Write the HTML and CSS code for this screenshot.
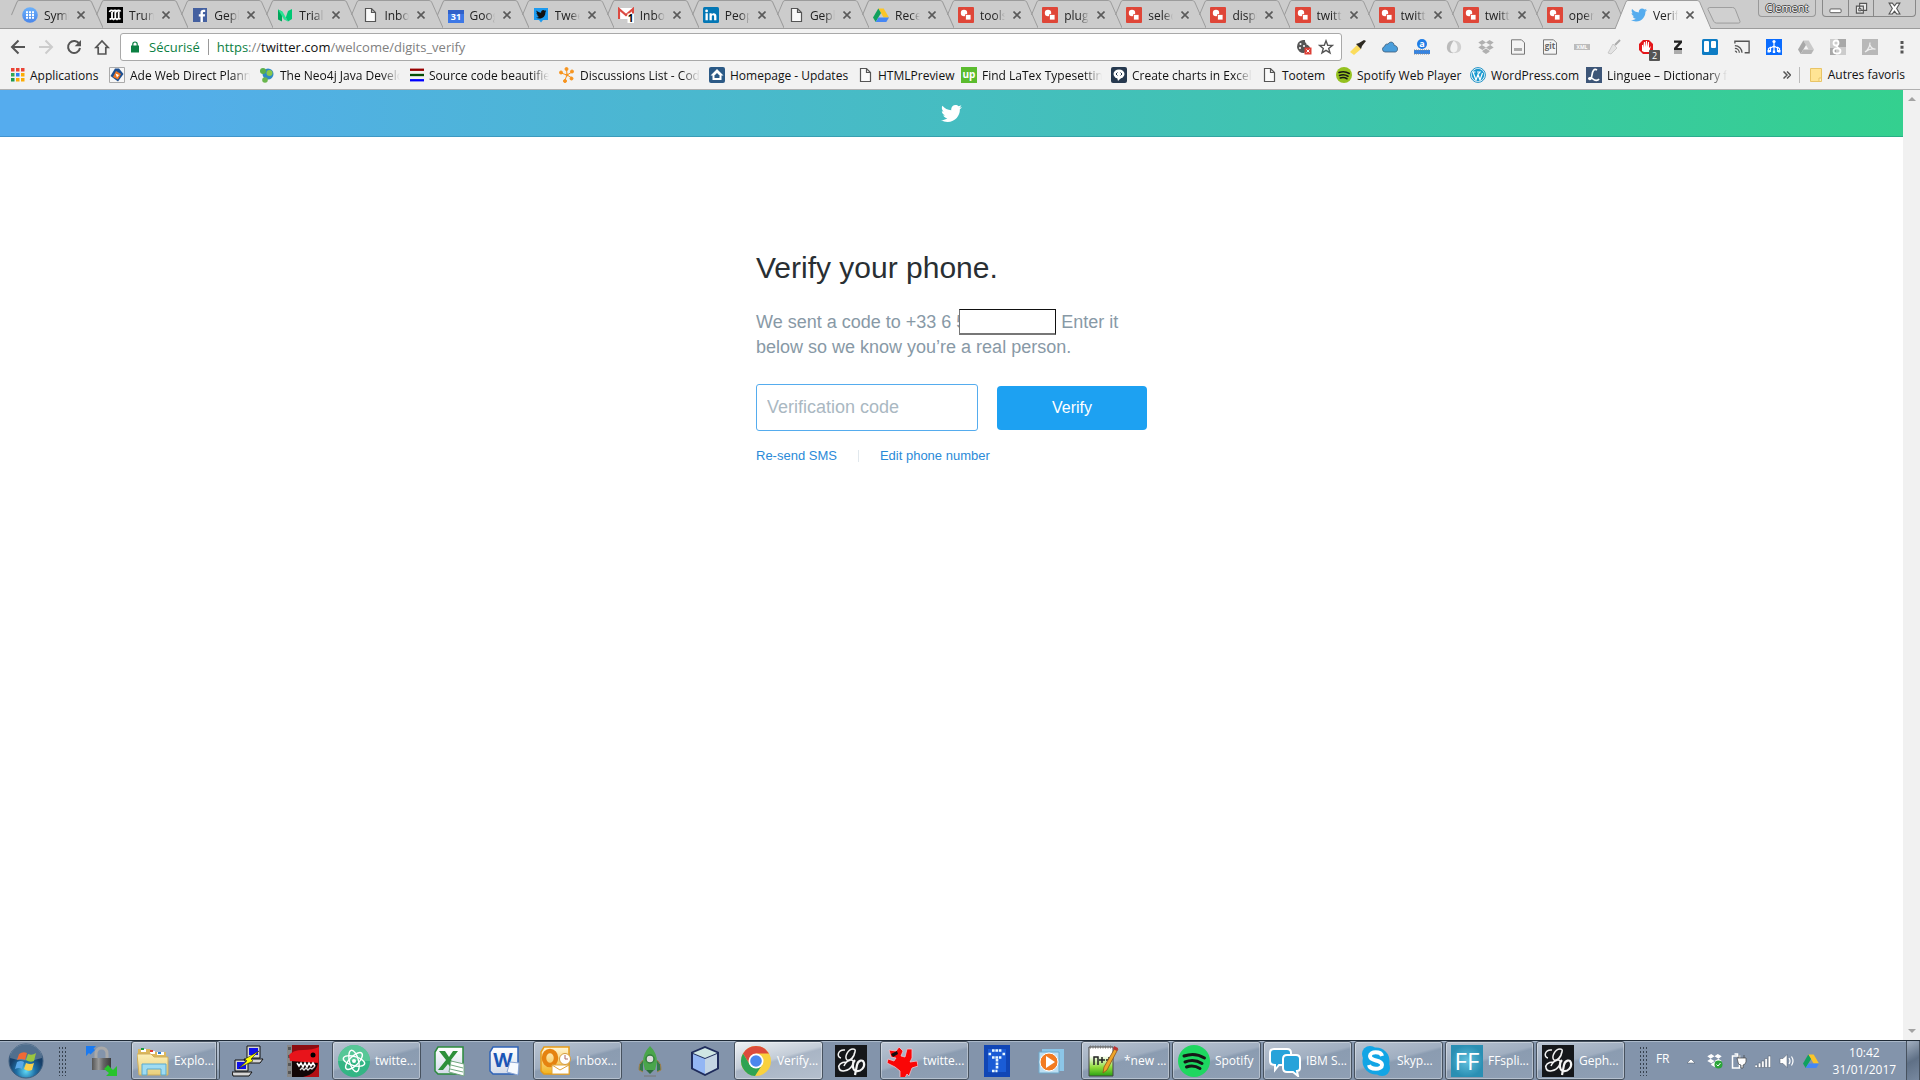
FILE: index.html
```html
<!DOCTYPE html>
<html lang="en">
<head>
<meta charset="utf-8">
<title>Verify your phone</title>
<link rel="stylesheet" href="styles.css">
</head>
<body>
<svg class="paints" aria-hidden="true">
  <defs>
    <linearGradient id="g-blue" x2="0" y2="1"><stop offset="0" stop-color="#6bb1fb"/><stop offset="1" stop-color="#4a86ea"/></linearGradient>
    <linearGradient id="g-page" x2="0" y2="1"><stop offset="0" stop-color="#fff"/><stop offset="1" stop-color="#d5dcea"/></linearGradient>
    <linearGradient id="g-gold" x2="0" y2="1"><stop offset="0" stop-color="#fff6d8"/><stop offset="1" stop-color="#f2b21c"/></linearGradient>
    <linearGradient id="g-folder" x2="0" y2="1"><stop offset="0" stop-color="#fbefb6"/><stop offset="1" stop-color="#e9cf7c"/></linearGradient>
    <linearGradient id="g-metal"><stop offset="0" stop-color="#555"/><stop offset=".35" stop-color="#999"/><stop offset=".6" stop-color="#666"/><stop offset="1" stop-color="#3c3c3c"/></linearGradient>
    <radialGradient id="g-orb" cy=".8"><stop offset="0" stop-color="#5fd8f6"/><stop offset=".55" stop-color="#1f6fa5"/><stop offset="1" stop-color="#173f69"/></radialGradient>
    <radialGradient id="g-ff"><stop offset="0" stop-color="#62c0dd"/><stop offset="1" stop-color="#2a8fb3"/></radialGradient>
    <linearGradient id="g-note" x2="0" y2="1"><stop offset=".3" stop-color="#fff"/><stop offset=".7" stop-color="#8fdc3a"/><stop offset="1" stop-color="#29a012"/></linearGradient>
  </defs>
</svg>
<svg class="sprite" aria-hidden="true">
  <symbol id="tab-line" viewBox="0 0 97 28" preserveAspectRatio="none"><path d="M5.500 15 11 2Q11.500 .5 13 .5H83Q84.500 .5 85.500 2L97 28" fill="none" stroke="#9c9c9c" vector-effect="non-scaling-stroke"/></symbol>
  <symbol id="tab-active" viewBox="0 0 97 28" preserveAspectRatio="none"><path d="M0 28 11 2Q11.500 .5 13 .5H83Q84.500 .5 85.500 2L97 28" fill="#f2f2f2" stroke="#9c9c9c" vector-effect="non-scaling-stroke"/></symbol>
  <symbol id="close" viewBox="0 0 8 8"><path d="M.5.5l7 7M7.500.5l-7 7" stroke="#5a5a5a" stroke-width="1.600"/></symbol>
  <symbol id="bird" viewBox="0 0 24 24"><path d="M23.954 4.569c-.885.389-1.830.654-2.825.775 1.014-.611 1.794-1.574 2.163-2.723-.951.555-2.005.959-3.127 1.184-.896-.959-2.173-1.559-3.591-1.559-2.717 0-4.920 2.203-4.920 4.917 0 .39.045.765.127 1.124C7.691 8.094 4.066 6.130 1.640 3.161c-.427.722-.666 1.561-.666 2.475 0 1.710.87 3.213 2.188 4.096-.807-.026-1.566-.248-2.228-.616v.061c0 2.385 1.693 4.374 3.946 4.827-.413.111-.849.171-1.296.171-.314 0-.615-.03-.916-.086.631 1.953 2.445 3.377 4.604 3.417-1.680 1.319-3.809 2.105-6.102 2.105-.39 0-.779-.023-1.170-.067 2.189 1.394 4.768 2.209 7.557 2.209 9.054 0 13.999-7.496 13.999-13.986 0-.209 0-.42-.015-.63.961-.689 1.800-1.560 2.460-2.548z" fill="currentColor"/></symbol>
  <symbol id="f-grid" viewBox="0 0 16 16"><circle cx="8" cy="8" r="7.800" fill="url(#g-blue)"/><path d="M4 5.200h8M4 8h8M4 10.800h8" stroke="#fff" stroke-width="2" stroke-dasharray="2 1"/></symbol>
  <symbol id="f-m" viewBox="0 0 16 16"><path d="M0 0h16v16H0z"/><path d="M2.500 5C3 3 5 3 6 4.200c1-1.200 3-1.200 3.700 0 1.200-1.300 3.300-1 3.800.3M5 5v6.500M8.300 4.500V11M11.700 4.500V11M2.500 12.300l2.500-1 1.500 1.200 1.800-1.200 1.700 1.200 1.700-1.200 1.800 1" fill="none" stroke="#fff" stroke-width="1.800"/></symbol>
  <symbol id="f-fb" viewBox="0 0 16 16"><path d="M1 1h14v14H1z" fill="#4460a0"/><path d="M8.500 15V9.500H6.800V7.300h1.700V5.600c0-2 1.200-2.900 2.900-2.900h1.800v2.200h-1.200c-.9 0-1.100.4-1.100 1.100v1.300h2.200l-.3 2.200h-1.900V15z" fill="#fff"/></symbol>
  <symbol id="f-n" viewBox="0 0 16 16"><path d="M1 2.500l4 2v10l-4-2z" fill="#00a65a"/><path d="M1 2.500l4.500 2 5.500 10-4-2z" fill="#29e292"/><path d="M11 4l4-2v10l-4 2.500-2.200-4z" fill="#00c874"/></symbol>
  <symbol id="page" viewBox="0 0 16 16"><path d="M3.500 1.500h6l4 4v9h-10zM9.500 1.500v4h4" fill="#fafafa" stroke="#555" stroke-width="1.200"/></symbol>
  <symbol id="f-cal" viewBox="0 0 16 16"><path d="M0 1h16v4H0z" fill="#ccc"/><path d="M0 3h16v13H0z" fill="#3d78e6"/><path d="M0 3h16v4H0z" fill="#3161c9"/><text x="8" y="12.500" text-anchor="middle" font-size="9" font-weight="700" fill="#fff">31</text></symbol>
  <symbol id="f-tw" viewBox="0 0 16 16"><path d="M1 1h14v12h-5l-2 2.500L6 13H1z" fill="#1d9bf0"/><svg x="3" y="2" width="10.500" height="10.500" color="#111"><use href="#bird"/></svg></symbol>
  <symbol id="f-mail" viewBox="0 0 16 16"><path d="M0 1h16v11H0z" fill="#fff"/><path d="M1 12V2l7 6 7-6v5" fill="none" stroke="#dc4a41" stroke-width="2.200"/><path d="M9.500 6.500H16V16H9.500z" fill="#fff"/><text x="12.500" y="15" text-anchor="middle" font-size="10" font-weight="700">1</text></symbol>
  <symbol id="f-in" viewBox="0 0 16 16"><rect width="16" height="16" rx="1.500" fill="#0377b5"/><path d="M2.500 6.300h2.300v7H2.500zM6.500 6.300h2.200v1c1-1.700 4.700-1.700 4.700 1.700v4.300h-2.300V9.600c0-2-2.300-1.900-2.300 0v3.700H6.500z" fill="#fff"/><circle cx="3.600" cy="3.900" r="1.400" fill="#fff"/></symbol>
  <symbol id="drive" viewBox="0 0 16 16"><path d="M5.300 1.500h5.400L16 10.500h-5.400z" fill="#fbc527"/><path d="M5.300 1.500L8 6.100 2.700 15 0 10.500z" fill="#11a15e"/><path d="M5.500 10.500H16L13.300 15H2.700z" fill="#4687f4"/></symbol>
  <symbol id="drive-grey" viewBox="0 0 16 16"><path d="M5.300 1.500h5.400L16 10.500h-5.400z" fill="#c9c9c9"/><path d="M5.300 1.500L8 6.100 2.700 15 0 10.500z" fill="#a8a8a8"/><path d="M5.500 10.500H16L13.300 15H2.700z" fill="#b5b5b5"/></symbol>
  <symbol id="f-red" viewBox="0 0 16 16"><rect width="16" height="16" rx="1" fill="#df4638"/><circle cx="6" cy="6" r="3.200" fill="#fff"/><path d="M7.500 7.500H13V13H7.500z" fill="#fff" stroke="#df4638" stroke-width=".8"/></symbol>
  <symbol id="back" viewBox="0 0 16 16"><path d="M15 8H2M8.500 1.500L2 8l6.500 6.500" fill="none" stroke="currentColor" stroke-width="2"/></symbol>
  <symbol id="reload" viewBox="0 0 16 16"><path d="M13.300 5A6 6 0 1 0 14 9" fill="none" stroke="currentColor" stroke-width="2"/><path d="M15 1v6.300H8.700z" fill="currentColor"/></symbol>
  <symbol id="home" viewBox="0 0 16 16"><path d="M1.800 8.500L8 2l6.200 6.500h-2.400V15H4.200V8.500z" fill="none" stroke="currentColor" stroke-width="1.700"/></symbol>
  <symbol id="lock" viewBox="0 0 8 12"><path d="M0 4.500h8V11.500H0z" fill="#0b8043"/><path d="M1.800 5V3.200a2.200 2.200 0 0 1 4.400 0V5" fill="none" stroke="#0b8043" stroke-width="1.200"/></symbol>
  <symbol id="cookie" viewBox="0 0 16 16"><path d="M7 1a6.500 6.500 0 1 0 1 13l6-5c0-2-1.500-1.500-2-3-1.500 0-2-1-1.700-2C9 4 9 2 9 1z" fill="#555"/><circle cx="4.500" cy="5" r="1" fill="#fff"/><circle cx="4" cy="9" r="1" fill="#fff"/><circle cx="8" cy="7" r="1" fill="#fff"/><path d="M8.500 8.500h7v7h-7z" fill="#dd4037"/><path d="M10.500 10.500l3 3M13.500 10.500l-3 3" stroke="#fff"/></symbol>
  <symbol id="star" viewBox="0 0 16 16"><path d="M8 1.800l1.700 4.400 4.700.2-3.700 3 1.300 4.500L8 11.300l-4 2.600 1.300-4.500-3.700-3 4.700-.2z" fill="none" stroke="#555" stroke-width="1.400"/></symbol>
  <symbol id="e-torch" viewBox="0 0 16 16"><path d="M7 6L0 13l4 3 7-6z" fill="#fbdc5c"/><path d="M6 5l5 5 1-3 4-5-2-1-5 3z" fill="#2d2a22"/></symbol>
  <symbol id="e-cloud" viewBox="0 0 16 16"><path d="M3 13a2.800 2.800 0 0 1-.4-5.500C3 5 5 4.700 6 5.200 7.500 2 12 2.500 12.200 6.500 16.500 6.500 16.500 13 13 13z" fill="#4a9edb" stroke="#3c5c78" stroke-width=".8"/></symbol>
  <symbol id="e-a" viewBox="0 0 16 16"><circle cx="8" cy="5" r="5" fill="#1f7de6"/><text x="8" y="8" text-anchor="middle" font-size="9" font-weight="700" fill="#fff">a</text><path d="M0 11h16v4H0z" fill="#3684e2"/><path d="M0 11h16M0 15h16" stroke="#888" stroke-dasharray="1 1"/></symbol>
  <symbol id="e-swirl" viewBox="0 0 16 16"><path d="M8 1.500C2 1 .5 6 1 10c1 4 5 4.500 7 4-4-1-4-3.500-3.500-6S6.500 3 8 1.500z" fill="#bbb"/><path d="M7 1.500c6-.5 9 4 8 8-1 4-5 5-8 4.500 4-1 4.500-3 4.500-6S10 3 7 1.500z" fill="#d0d0d0"/></symbol>
  <symbol id="dropbox" viewBox="0 0 16 16"><path d="M4.500 1L8 3.500 3.800 6 .3 3.500zM11.500 1l4.200 2.500L12.200 6 8 3.500zM3.800 6L8 8.500 4.500 11 .3 8.500zM12.200 6l3.500 2.500-4.200 2.500L8 8.500zM8 9.500l3.500 2.300v1L8 15l-3.500-2.200v-1z" fill="currentColor"/></symbol>
  <symbol id="e-disk" viewBox="0 0 16 16"><path d="M1.500.8h10l3 3v11.400h-13z" fill="#f4f4f4" stroke="#777"/><path d="M4 9h8v3H4z" fill="#aaa"/></symbol>
  <symbol id="e-git" viewBox="0 0 16 16"><path d="M1.500.8h10l3 3v11.400h-13z" fill="#f4f4f4" stroke="#777"/><text x="8" y="10" text-anchor="middle" font-size="8" font-weight="700" fill="#666">git</text></symbol>
  <symbol id="e-xml" viewBox="0 0 16 16"><path d="M0 5h16v6H0z" fill="#bcbcbc"/><text x="8" y="10" text-anchor="middle" font-size="5" font-weight="700" fill="#fff">XML</text></symbol>
  <symbol id="e-brush" viewBox="0 0 16 16"><path d="M14 1L9 6" stroke="#aaa" stroke-width="2"/><path d="M7 5l4 4-6 6-3-1z" fill="#e3e3e3" stroke="#bbb" stroke-width=".7"/></symbol>
  <symbol id="e-block" viewBox="0 0 22 22"><path d="M5 1h6l4 4v6l-4 4H5l-4-4V5z" fill="#e4171b"/><path d="M4 12V6h1v3l1-6h1v5l1-6h1v6l1-5h1v6l2-2-2 6H6z" fill="#fff"/><rect x="11" y="11" width="11" height="11" rx="1" fill="#555"/><text x="16.500" y="20" text-anchor="middle" font-size="9" fill="#fff">2</text></symbol>
  <symbol id="e-z" viewBox="0 0 16 16"><path d="M4 1.500h8v2.300L7.300 9H12v2H4V9l4.700-5.300H4z" fill="#222"/><path d="M4 12h8M4 14h8" stroke="#666"/></symbol>
  <symbol id="e-board" viewBox="0 0 16 16"><rect width="16" height="16" rx="1.500" fill="#0e7cc4"/><rect x="2" y="2" width="5" height="11" rx="1" fill="#fff"/><rect x="9" y="2" width="5" height="7" rx="1" fill="#fff"/></symbol>
  <symbol id="e-cast" viewBox="0 0 18 16"><path d="M1 4V1.500h16v13h-5" fill="none" stroke="#555" stroke-width="1.500"/><path d="M1 6.500a8 8 0 0 1 8 8M1 9.500a5 5 0 0 1 5 5M1 12.500a2 2 0 0 1 2 2" fill="none" stroke="#555" stroke-width="1.400"/></symbol>
  <symbol id="e-tree" viewBox="0 0 16 16"><path d="M0 0h16v16H0z" fill="#0a6cff"/><path d="M8 3v10M8 7L4.500 9v4M8 7l3.500 2v4M2.500 12V9.500L5 8M13.500 12V9.500L11 8" fill="none" stroke="#fff" stroke-width="1.200"/><circle cx="8" cy="2.500" r="1.600" fill="#fff"/><path d="M1.500 11h2.500v2.500H1.500zM12 11h2.500v2.500H12zM6.800 11.500h2.400V14H6.800z" fill="#fff"/></symbol>
  <symbol id="e-g" viewBox="0 0 16 16"><path d="M0 0h16v16H0z" fill="#ccc"/><path d="M8 0h8v8H8zM0 9h6v7H0z" fill="#a8a8a8"/><circle cx="6" cy="4" r="2.500" fill="none" stroke="#fff" stroke-width="1.800"/><ellipse cx="7" cy="12" rx="3.500" ry="2.600" fill="none" stroke="#fff" stroke-width="1.800"/><path d="M6 6.500L8.500 9" stroke="#fff" stroke-width="1.500"/></symbol>
  <symbol id="e-pdf" viewBox="0 0 16 16"><path d="M0 0h16v16H0z" fill="#b8b8b8"/><path d="M3 13c4-3 5-6 5-9.500M8 6c1 3 3 4 5.500 4.200C10 9.500 6 10.500 3 13" fill="none" stroke="#eee" stroke-width="1.200"/></symbol>
  <symbol id="menu" viewBox="0 0 16 16"><path d="M6.500 2h3v3h-3zM6.500 6.700h3v3h-3zM6.500 11.400h3v3h-3z" fill="#555"/></symbol>
  <symbol id="b-apps" viewBox="0 0 14 14"><path d="M0 0h3.500v3.500H0zM5 0h3.500v3.500H5zM10 0h3.500v3.500H10z" fill="#ea4335"/><path d="M0 5h3.500v3.500H0z" fill="#34a853"/><path d="M5 5h3.500v3.500H5z" fill="#2d80f5"/><path d="M10 5h3.500v3.500H10zM5 10h3.500v3.500H5zM10 10h3.500v3.500H10z" fill="#fbac06"/><path d="M0 10h3.500v3.500H0z" fill="#1f9950"/></symbol>
  <symbol id="b-ade" viewBox="0 0 16 16"><path d="M.5.5h15v15H.5z" fill="#f6f6f6" stroke="#aaa"/><path d="M6 1.500h4L14.500 7 9 14.500 1.500 9z" fill="#1d4f91"/><path d="M7 4l5 3-3 5.500L4 10z" fill="#ee7623"/><path d="M6.500 6.500l3.500 1.500-2 2.500z" fill="#fff"/></symbol>
  <symbol id="b-neo" viewBox="0 0 16 16"><circle cx="9" cy="7" r="5.500" fill="#2d8ac5"/><circle cx="4" cy="4" r="3" fill="#5bb04a"/><circle cx="10.500" cy="6" r="3" fill="#8cc84b"/><circle cx="6" cy="13" r="2.800" fill="#6ab64d"/></symbol>
  <symbol id="b-src" viewBox="0 0 12 12"><path d="M0 1.500h12" stroke="#900" stroke-width="2"/><path d="M0 6h12" stroke="#064d06" stroke-width="2"/><path d="M0 10.500h12" stroke="#00f" stroke-width="2"/></symbol>
  <symbol id="b-disc" viewBox="0 0 16 16"><g fill="#f7941e" stroke="#f7941e"><path d="M8 8L7.500 2M8 8l5-3M8 8l5 3M8 8l-2 5M8 8L2 6"/><circle cx="7.500" cy="2" r="1.500"/><circle cx="13" cy="4.500" r="1.500"/><circle cx="12.500" cy="11.500" r="1.500"/><circle cx="6" cy="14" r="1.500"/><circle cx="2" cy="5.500" r="1.500"/><circle cx="8" cy="8" r="1"/></g></symbol>
  <symbol id="b-home" viewBox="0 0 16 16"><rect width="16" height="16" rx="2" fill="#2c5a86"/><path d="M8 2l6.500 6.500h-2V13h-9V8.500h-2z" fill="#fff"/><path d="M8 6l2.500 2.500V11h-5V8.500z" fill="#2c5a86"/></symbol>
  <symbol id="b-up" viewBox="0 0 16 16"><path d="M0 0h16v16H0z" fill="#5bbc2e"/><text x="8" y="11" text-anchor="middle" font-size="10" font-weight="700" fill="#fff">up</text></symbol>
  <symbol id="b-chart" viewBox="0 0 16 16"><rect width="16" height="16" rx="2" fill="#26394f"/><ellipse cx="8" cy="7" rx="5.500" ry="4.500" fill="#fff"/><path d="M6 10l1 4 3-3z" fill="#fff"/><path d="M6.500 5.500L5 7l1.500 1.500M9.500 5.500L11 7 9.500 8.500" fill="none" stroke="#26394f"/></symbol>
  <symbol id="spotify" viewBox="0 0 32 32"><circle cx="16" cy="16" r="16" fill="currentColor"/><path d="M6 11q11-4 20.500 2M7 17q9-3.500 17 1.500M8.500 22q7-2.500 13.500 1.500" fill="none" stroke="#161616" stroke-width="3" stroke-linecap="round"/></symbol>
  <symbol id="b-wp" viewBox="0 0 16 16"><circle cx="8" cy="8" r="7.400" fill="#fff" stroke="#1b8fc4"/><circle cx="8" cy="8" r="6.200" fill="#1b9ad0"/><path d="M3 5l3 8L8 7.500 10 13l2.500-7M2.500 5h3M7 5h3L8 7.500" fill="none" stroke="#fff" stroke-width="1.200"/></symbol>
  <symbol id="b-ling" viewBox="0 0 16 16"><path d="M0 0h16v16H0z" fill="#3d5678"/><path d="M11 3C8 1 6.500 4 6 8s-2 5-3 4 2-2 4 0 5 1.500 6 0" fill="none" stroke="#fff" stroke-width="1.700"/></symbol>
  <symbol id="folder" viewBox="0 0 12 14"><path d="M.5.5h11v10l-1 3H.5z" fill="#ffe494" stroke="#e8c467"/><path d="M9 10h2.500v3.500H9z" fill="#fff0bf" stroke="#e8c467"/></symbol>
  <symbol id="t-orb" viewBox="0 0 36 36"><circle cx="18" cy="18" r="17" fill="url(#g-orb)" stroke="#3f5f80"/><path d="M2 15a16 14 0 0 1 32 0q-16 5-32 0z" fill="#fff" opacity=".25"/><path d="M11 11q4-3 8-1l-2 7q-4-2-8 0z" fill="#ef6a35"/><path d="M20 11q4 2 8-1l-2 8q-4 2-8-1z" fill="#9ac640"/><path d="M9 19q4-2 7 0l-2 7q-3-2-7 0z" fill="#5aa8e8"/><path d="M18 20q4 2 8 0l-2 7q-4 2-8-1z" fill="#fcd04b"/></symbol>
  <symbol id="t-lock" viewBox="0 0 32 32"><path d="M10 14V9q0-6 5.500-6T21 9v5" fill="none" stroke="#a9a9a9" stroke-width="3"/><path d="M6 13h19v12H6z" fill="url(#g-metal)"/><path d="M0 1h10L7.500 3.500 9 5 4.500 9.500 3 8 0 11z" fill="#1b7af0"/><path d="M31 31H20l3-3-5-4 4-4 5 5 4-4z" fill="#27c32c"/></symbol>
  <symbol id="t-files" viewBox="0 0 32 32"><path d="M1 4h12l2 3h14v17H1z" fill="#dcb75a"/><path d="M4 4h5v3H4zM13 6h5v3h-5zM20 7h7v3h-7z" fill="#fff"/><path d="M4 3h3v2H4z" fill="#1a9c3c"/><path d="M13 5h3v2h-3z" fill="#e23b2e"/><path d="M21 7h3v2h-3z" fill="#2880d9"/><path d="M0 9h14l3 3h14v18H2z" fill="url(#g-folder)" stroke="#cfae5c"/><path d="M5 30V19h24v11h-5v-6H10v6z" fill="#9fdcf2" stroke="#58a9cf"/></symbol>
  <symbol id="t-putty" viewBox="0 0 32 32"><g stroke="#111" fill="#d6d6d6"><path d="M15 1h13v12H15zM12 14h19l-3 4H14zM3 15h13v11H3zM0 27h20l-3 4H1z"/></g><path d="M17 3h9v7h-9zM5 17h9v7H5z" fill="#1010e8"/><path d="M27 6L13 14l2 2-8 7 14-7-2-2z" fill="#ff0" stroke="#222" stroke-width=".6"/></symbol>
  <symbol id="t-red" viewBox="0 0 32 32"><path d="M0 0h32v32H0z" fill="#120606"/><path d="M0 0h5v32H0z" fill="#888"/><path d="M1 2h3v3H1zM1 10h3v3H1zM1 18h3v3H1zM1 26h3v3H1z" fill="#555"/><path d="M5 0h27v7H5z" fill="#8d0c10"/><path d="M2 10Q6 5 16 5t16-3v16q-14-1-29-2z" fill="#e8141b"/><path d="M32 2v30H16q14-3 15-15z" fill="#b30e14"/><circle cx="26" cy="10" r="2.500"/><path d="M10 18l2 3 2-3 2 4 2-4 2 4 2-4 2 3 2-3 2 3" fill="none" stroke="#fff" stroke-width="1.600"/><path d="M13 25l2-2 2 2 2-2 2 2 2-2 2 1 3-3" fill="none" stroke="#ddd" stroke-width="1.400"/></symbol>
  <symbol id="t-atom" viewBox="0 0 32 32"><circle cx="16" cy="16" r="16" fill="#33b584"/><path d="M0 16a16 16 0 0 1 32 0z" fill="#66cfa0" opacity=".7"/><g fill="none" stroke="#fff" stroke-width="1.400"><ellipse cx="16" cy="16" rx="11" ry="4.500" transform="rotate(15 16 16)"/><ellipse cx="16" cy="16" rx="11" ry="4.500" transform="rotate(75 16 16)"/><ellipse cx="16" cy="16" rx="11" ry="4.500" transform="rotate(135 16 16)"/></g><circle cx="16" cy="16" r="2" fill="#fff"/></symbol>
  <symbol id="t-excel" viewBox="0 0 32 32"><path d="M5 2h25v27H5L2 26V7z" fill="url(#g-page)" stroke="#2b8a3c" stroke-width="1.500"/><path d="M6 6h6l4 6 4-6h5l-7 9 7 10h-6l-4-6-5 6H5l8-10z" fill="#2d8f3a"/><path d="M18 16l13 3v12l-15-4z" fill="#fff" stroke="#72a780"/><path d="M18 20l12 3M17 24l13 3" stroke="#72a780"/></symbol>
  <symbol id="t-word" viewBox="0 0 32 32"><path d="M5 2h25v27H5L2 26V7z" fill="url(#g-page)" stroke="#2f63b8" stroke-width="1.500"/><text x="15" y="22" text-anchor="middle" font-size="20" font-weight="700" fill="#1a55b6">W</text><path d="M22 17l9 1-1 12-11-3z" fill="#f7faff" stroke="#8ca6d4"/></symbol>
  <symbol id="t-outlook" viewBox="0 0 32 32"><path d="M5 2h25v27H5L2 26V7z" fill="url(#g-gold)" stroke="#e79b16" stroke-width="1.500"/><ellipse cx="11" cy="13" rx="6" ry="7" fill="none" stroke="#e58310" stroke-width="4.500"/><path d="M13 20h17v9H13z" fill="#fff" stroke="#e0a63c"/><path d="M13 20l8 5 9-5" fill="none" stroke="#e0a63c"/><circle cx="26" cy="14" r="5.500" fill="#fff" stroke="#d49b3c"/><path d="M26 10v4h3" fill="none" stroke="#a66"/></symbol>
  <symbol id="t-rocket" viewBox="0 0 32 32"><path d="M16 1q-7 7-7 16l2 8h10l2-8q0-9-7-16z" fill="#4aa64b"/><path d="M9 15q-5 4-4 10l4 2M23 15q5 4 4 10l-4 2" fill="#347a4b" stroke="#a7804e"/><path d="M12 25h8l-4 4z" fill="#2c6b3c"/><circle cx="16" cy="14" r="4" fill="#ddd" stroke="#327e3c" stroke-width="1.500"/><path d="M10 31h12" stroke="#777" stroke-width="1"/></symbol>
  <symbol id="t-cube" viewBox="0 0 32 32"><path d="M16 1l14 6v17l-14 7L2 24V7z" fill="#1f2c5c"/><path d="M16 3l12 5-12 5L4 8z" fill="#cfe6e3"/><path d="M4 9l12 5v15L4 23z" fill="#93b6f4"/><path d="M28 9l-12 5v15l12-6z" fill="#c4d5e4"/></symbol>
  <symbol id="t-chrome" viewBox="0 0 32 32"><circle cx="16" cy="16" r="15" fill="#f9d13e"/><path d="M3 8.500A15 15 0 0 1 29 8.500H16L10 20z" fill="#dd4b3b"/><path d="M3 8.500A15 15 0 0 0 15 31l7-11-12 0z" fill="#2fa353"/><circle cx="16" cy="16" r="7.500" fill="#fff"/><circle cx="16" cy="16" r="5.800" fill="#4a87ee"/></symbol>
  <symbol id="t-gephi" viewBox="0 0 32 32"><path d="M0 0h32v32H0z" fill="#15171a"/><path d="M19 9q3-5-1-5c-5 0-9 8-6 11 3 1 7-3 8-8M10 5C3 4 1 12 6 13M20 7c-1 6-4 9-9 10-5 0-8 3-7 6 1 5 10 3 13-2 2-3 2-6-1-6-3 0-6 3-7 6" fill="none" stroke="#f4f4f4" stroke-width="1.500"/><path d="M20 15c-3 3-3 10 1 11 5 1 9-4 8-8-1-4-6-3-7 2l-2 10" fill="none" stroke="#f4f4f4" stroke-width="2.200"/></symbol>
  <symbol id="t-splat" viewBox="0 0 32 32"><path d="M3 5l7 1 3-4 4 4-2 5 4 1 2-8h5v9l-2 4 7-1 1 5-6 2-3 8-2-2-2 4h-5v-7l-5-4-8-4 1-4 6 2 2-3-5-1z" fill="#fa0606" stroke="#e9c7d2" stroke-width=".8"/><path d="M5 9l6-3 1 3-5 3z" fill="#111"/></symbol>
  <symbol id="t-t" viewBox="0 0 26 32"><path d="M0 0h26v32H0z" fill="#1146b5"/><path d="M4 4h18v23H4z" fill="#1a5cd6"/><path d="M8 5.500h10M4.500 9h3M18.500 9h3M8 12.500h10M13 14v10M8 26h5.500" fill="none" stroke="#e8f7ff" stroke-width="2.600" stroke-dasharray="2.600 .8"/></symbol>
  <symbol id="t-play" viewBox="0 0 32 32"><path d="M6 4h22v22H6z" fill="#8cc6e8"/><path d="M3 7h20v21H3z" fill="#bcdff3" stroke="#6ca8ca"/><circle cx="13" cy="17" r="9" fill="#f27b21" stroke="#fff"/><path d="M10 11l9 6-9 6z" fill="#fff"/></symbol>
  <symbol id="t-npp" viewBox="0 0 32 32"><path d="M2 2h24v29H2z" fill="url(#g-note)" stroke="#444"/><path d="M3 2h22" stroke="#777" stroke-width="3" stroke-dasharray="1 1.500"/><path d="M7 20v-8h4v8M12 15h6M15 12v6M19 15h6M22 12v6" fill="none" stroke="#222" stroke-width="1.500"/><path d="M28 3l3 1-11 21-4 3 1-6z" fill="#eea52a" stroke="#8b541c" stroke-width=".8"/><path d="M27 1l4 2-1 3-4-2z" fill="#b33"/></symbol>
  <symbol id="t-chat" viewBox="0 0 32 32"><g stroke="#fff" stroke-width="2" fill="#27a3da"><path d="M5 4h13q4 0 4 4v8q0 4-4 4h-8l-4 5v-5q-5 0-5-4V8q0-4 4-4z"/><path d="M18 10h9q4 0 4 4v9q0 3-3 3l1 5-5-4h-6q-4 0-4-4v-9q0-4 4-4z"/></g></symbol>
  <symbol id="t-skype" viewBox="0 0 32 32"><circle cx="16" cy="16" r="13.500" fill="#12a5e5"/><circle cx="10" cy="9" r="8" fill="#12a5e5"/><circle cx="22" cy="23" r="8" fill="#12a5e5"/><path d="M22 11c-1-5-12-5-12 0 0 6 12 3 12 9 0 5-12 5-13 0" fill="none" stroke="#fff" stroke-width="4"/></symbol>
  <symbol id="t-ff" viewBox="0 0 32 32"><path d="M0 0h32v32H0z" fill="url(#g-ff)"/><text x="16" y="25" text-anchor="middle" font-size="24" fill="#fff">FF</text></symbol>
  <symbol id="s-drop" viewBox="0 0 16 16"><svg color="#fff" width="15" height="15"><use href="#dropbox"/></svg><circle cx="11.500" cy="11.500" r="4" fill="#2ba53a"/><path d="M9.500 11.500l1.500 1.500 2.500-3" fill="none" stroke="#fff"/></symbol>
  <symbol id="s-plug" viewBox="0 0 16 16"><path d="M1.500 3h7v12h-7zM3.500 1h3v2" fill="none" stroke="#fff" stroke-width="1.500"/><path d="M6 5h9v4q-1 3-3 3v3h-2v-3Q7 12 7 9zM8 2v3M13 2v3" fill="#fff" stroke="#444" stroke-width=".7"/></symbol>
  <symbol id="s-bars" viewBox="0 0 16 16"><path d="M0 12h2.500v2.500H0zM3.300 10h2.500v4.500H3.300zM6.600 8h2.500v6.500H6.600zM9.900 5.500h2.500v9H9.900zM13.200 3h2.500v11.500h-2.500z" fill="#fff" stroke="#4c5868" stroke-width=".5"/></symbol>
  <symbol id="s-vol" viewBox="0 0 16 16"><path d="M1 5.500h3l4-4v13l-4-4H1z" fill="#fff" stroke="#4c5868" stroke-width=".5"/><path d="M10 5q2 3 0 6M12.500 3.500q3 4.500 0 9" fill="none" stroke="#fff" stroke-width="1.200"/></symbol>
</svg>

<header class="browser">
  <div class="strip">
    <ul class="tabs">
      <li class="tab"><svg class="edge"><use href="#tab-line"/></svg><button class="title"><svg class="ico"><use href="#f-grid"/></svg><span>Syml</span></button><button class="close" aria-label="Close"><svg><use href="#close"/></svg></button></li>
      <li class="tab"><svg class="edge"><use href="#tab-line"/></svg><button class="title"><svg class="ico"><use href="#f-m"/></svg><span>Trum</span></button><button class="close" aria-label="Close"><svg><use href="#close"/></svg></button></li>
      <li class="tab"><svg class="edge"><use href="#tab-line"/></svg><button class="title"><svg class="ico"><use href="#f-fb"/></svg><span>Geph</span></button><button class="close" aria-label="Close"><svg><use href="#close"/></svg></button></li>
      <li class="tab"><svg class="edge"><use href="#tab-line"/></svg><button class="title"><svg class="ico"><use href="#f-n"/></svg><span>Trial</span></button><button class="close" aria-label="Close"><svg><use href="#close"/></svg></button></li>
      <li class="tab"><svg class="edge"><use href="#tab-line"/></svg><button class="title"><svg class="ico"><use href="#page"/></svg><span>Inbo</span></button><button class="close" aria-label="Close"><svg><use href="#close"/></svg></button></li>
      <li class="tab"><svg class="edge"><use href="#tab-line"/></svg><button class="title"><svg class="ico"><use href="#f-cal"/></svg><span>Goog</span></button><button class="close" aria-label="Close"><svg><use href="#close"/></svg></button></li>
      <li class="tab"><svg class="edge"><use href="#tab-line"/></svg><button class="title"><svg class="ico"><use href="#f-tw"/></svg><span>Twee</span></button><button class="close" aria-label="Close"><svg><use href="#close"/></svg></button></li>
      <li class="tab"><svg class="edge"><use href="#tab-line"/></svg><button class="title"><svg class="ico"><use href="#f-mail"/></svg><span>Inbo</span></button><button class="close" aria-label="Close"><svg><use href="#close"/></svg></button></li>
      <li class="tab"><svg class="edge"><use href="#tab-line"/></svg><button class="title"><svg class="ico"><use href="#f-in"/></svg><span>Peop</span></button><button class="close" aria-label="Close"><svg><use href="#close"/></svg></button></li>
      <li class="tab"><svg class="edge"><use href="#tab-line"/></svg><button class="title"><svg class="ico"><use href="#page"/></svg><span>Geph</span></button><button class="close" aria-label="Close"><svg><use href="#close"/></svg></button></li>
      <li class="tab"><svg class="edge"><use href="#tab-line"/></svg><button class="title"><svg class="ico"><use href="#drive"/></svg><span>Rece</span></button><button class="close" aria-label="Close"><svg><use href="#close"/></svg></button></li>
      <li class="tab"><svg class="edge"><use href="#tab-line"/></svg><button class="title"><svg class="ico"><use href="#f-red"/></svg><span>tools</span></button><button class="close" aria-label="Close"><svg><use href="#close"/></svg></button></li>
      <li class="tab"><svg class="edge"><use href="#tab-line"/></svg><button class="title"><svg class="ico"><use href="#f-red"/></svg><span>plug</span></button><button class="close" aria-label="Close"><svg><use href="#close"/></svg></button></li>
      <li class="tab"><svg class="edge"><use href="#tab-line"/></svg><button class="title"><svg class="ico"><use href="#f-red"/></svg><span>selec</span></button><button class="close" aria-label="Close"><svg><use href="#close"/></svg></button></li>
      <li class="tab"><svg class="edge"><use href="#tab-line"/></svg><button class="title"><svg class="ico"><use href="#f-red"/></svg><span>displ</span></button><button class="close" aria-label="Close"><svg><use href="#close"/></svg></button></li>
      <li class="tab"><svg class="edge"><use href="#tab-line"/></svg><button class="title"><svg class="ico"><use href="#f-red"/></svg><span>twitt</span></button><button class="close" aria-label="Close"><svg><use href="#close"/></svg></button></li>
      <li class="tab"><svg class="edge"><use href="#tab-line"/></svg><button class="title"><svg class="ico"><use href="#f-red"/></svg><span>twitt</span></button><button class="close" aria-label="Close"><svg><use href="#close"/></svg></button></li>
      <li class="tab"><svg class="edge"><use href="#tab-line"/></svg><button class="title"><svg class="ico"><use href="#f-red"/></svg><span>twitt</span></button><button class="close" aria-label="Close"><svg><use href="#close"/></svg></button></li>
      <li class="tab"><svg class="edge"><use href="#tab-line"/></svg><button class="title"><svg class="ico"><use href="#f-red"/></svg><span>oper</span></button><button class="close" aria-label="Close"><svg><use href="#close"/></svg></button></li>
      <li class="tab active"><svg class="edge"><use href="#tab-active"/></svg><button class="title"><svg class="ico bird-blue"><use href="#bird"/></svg><span>Verif</span></button><button class="close" aria-label="Close"><svg><use href="#close"/></svg></button></li>
    </ul>
    <button class="new-tab" aria-label="New tab"><svg viewBox="0 0 36 18"><path d="M3 .5h24q2 0 3 2l5 13q0 1.500-1.500 1.500H10q-2 0-3-2L1 2.500Q1 .5 3 .5z" fill="#d0d0d0" stroke="#9a9a9a"/></svg></button>
    <button class="profile">Clement</button>
    <div class="window-controls">
      <button aria-label="Minimize"><svg viewBox="0 0 14 12"><rect x="1" y="6.500" width="12" height="4" rx="1" fill="#fff" stroke="#555"/></svg></button>
      <button aria-label="Restore"><svg viewBox="0 0 14 14"><path d="M5 1.500h7.500V9H5zM1.500 4.500H9V12H1.500z" fill="#e8e8e8" stroke="#555" stroke-width="1.200"/><path d="M4 7h2.500v2.500H4z" fill="#ccc" stroke="#555"/></svg></button>
      <button class="wide" aria-label="Close window"><svg viewBox="0 0 12 12"><path d="M1 1h3l2 2.500L8 1h3L8 6l3 5H8L6 8.500 4 11H1l3-5z" fill="#fff" stroke="#555"/></svg></button>
    </div>
  </div>

  <div class="toolbar">
    <nav class="nav-buttons">
      <button aria-label="Back"><svg><use href="#back"/></svg></button>
      <button aria-label="Forward" class="forward" disabled><svg><use href="#back"/></svg></button>
      <button aria-label="Reload"><svg><use href="#reload"/></svg></button>
      <button aria-label="Home"><svg><use href="#home"/></svg></button>
    </nav>
    <div class="omnibox">
      <svg class="lock"><use href="#lock"/></svg>
      <span class="secure">Sécurisé</span>
      <span class="url"><span class="green">https</span>://<b>twitter.com</b>/welcome/digits_verify</span>
      <svg class="ico"><use href="#cookie"/></svg>
      <svg class="ico"><use href="#star"/></svg>
    </div>
    <div class="extensions">
      <button aria-label="Torch"><svg><use href="#e-torch"/></svg></button>
      <button aria-label="Cloud"><svg><use href="#e-cloud"/></svg></button>
      <button aria-label="Ruler"><svg><use href="#e-a"/></svg></button>
      <button aria-label="Swirl"><svg><use href="#e-swirl"/></svg></button>
      <button aria-label="Dropbox" class="grey"><svg><use href="#dropbox"/></svg></button>
      <button aria-label="Save"><svg><use href="#e-disk"/></svg></button>
      <button aria-label="Git"><svg><use href="#e-git"/></svg></button>
      <button aria-label="XML"><svg><use href="#e-xml"/></svg></button>
      <button aria-label="Cleaner"><svg><use href="#e-brush"/></svg></button>
      <button aria-label="Ad blocker" class="badged"><svg><use href="#e-block"/></svg></button>
      <button aria-label="Zotero"><svg><use href="#e-z"/></svg></button>
      <button aria-label="Board"><svg><use href="#e-board"/></svg></button>
      <button aria-label="Cast"><svg><use href="#e-cast"/></svg></button>
      <button aria-label="Sitemap"><svg><use href="#e-tree"/></svg></button>
      <button aria-label="Drive"><svg><use href="#drive-grey"/></svg></button>
      <button aria-label="Google"><svg><use href="#e-g"/></svg></button>
      <button aria-label="PDF"><svg><use href="#e-pdf"/></svg></button>
      <button aria-label="Menu"><svg><use href="#menu"/></svg></button>
    </div>
  </div>

  <nav class="bookmarks">
    <div class="marks">
      <a href="#"><svg class="ico small"><use href="#b-apps"/></svg><span>Applications</span></a>
      <a href="#"><svg class="ico"><use href="#b-ade"/></svg><span class="fade">Ade Web Direct Plann</span></a>
      <a href="#"><svg class="ico"><use href="#b-neo"/></svg><span class="fade">The Neo4j Java Develo</span></a>
      <a href="#"><svg class="ico small"><use href="#b-src"/></svg><span class="fade">Source code beautifier</span></a>
      <a href="#"><svg class="ico"><use href="#b-disc"/></svg><span class="fade">Discussions List - Codi</span></a>
      <a href="#"><svg class="ico"><use href="#b-home"/></svg><span>Homepage - Updates</span></a>
      <a href="#"><svg class="ico"><use href="#page"/></svg><span>HTMLPreview</span></a>
      <a href="#"><svg class="ico"><use href="#b-up"/></svg><span class="fade">Find LaTex Typesetting</span></a>
      <a href="#"><svg class="ico"><use href="#b-chart"/></svg><span class="fade">Create charts in Excel</span></a>
      <a href="#"><svg class="ico"><use href="#page"/></svg><span>Tootem</span></a>
      <a href="#"><svg class="ico lime"><use href="#spotify"/></svg><span>Spotify Web Player</span></a>
      <a href="#"><svg class="ico"><use href="#b-wp"/></svg><span>WordPress.com</span></a>
      <a href="#"><svg class="ico"><use href="#b-ling"/></svg><span class="fade">Linguee – Dictionary f</span></a>
    </div>
    <button class="more" aria-label="More bookmarks"><svg viewBox="0 0 8 8"><path d="M.5.5L4 4 .5 7.500M4 .5L7.500 4 4 7.500" fill="none" stroke="#555" stroke-width="1.500"/></svg></button>
    <a href="#" class="others"><svg><use href="#folder"/></svg><span>Autres favoris</span></a>
  </nav>
</header>

<div class="viewport">
  <div class="page">
    <div class="banner"><svg aria-label="Twitter"><use href="#bird"/></svg></div>
    <main>
      <h1>Verify your phone.</h1>
      <p>We sent a code to +33 6 5<span class="mask"></span> Enter it below so we know you’re a real person.</p>
      <form>
        <input type="text" placeholder="Verification code" aria-label="Verification code">
        <button type="button">Verify</button>
      </form>
      <div class="links"><a href="#">Re-send SMS</a><span class="bar"></span><a href="#">Edit phone number</a></div>
    </main>
  </div>
  <div class="scrollbar"><span class="up"></span><span class="down"></span></div>
</div>

<footer class="taskbar">
  <button class="orb" aria-label="Start"><svg><use href="#t-orb"/></svg></button>
  <span class="grip"></span>
  <div class="apps">
    <button class="pin" aria-label="Lock"><svg><use href="#t-lock"/></svg></button>
    <button class="app stacked"><svg><use href="#t-files"/></svg><span>Explo...</span></button>
    <button class="pin" aria-label="PuTTY"><svg><use href="#t-putty"/></svg></button>
    <button class="pin" aria-label="Shark"><svg><use href="#t-red"/></svg></button>
    <button class="app"><svg><use href="#t-atom"/></svg><span>twitte...</span></button>
    <button class="pin" aria-label="Excel"><svg><use href="#t-excel"/></svg></button>
    <button class="pin" aria-label="Word"><svg><use href="#t-word"/></svg></button>
    <button class="app"><svg><use href="#t-outlook"/></svg><span>Inbox...</span></button>
    <button class="pin" aria-label="Rocket"><svg><use href="#t-rocket"/></svg></button>
    <button class="pin" aria-label="NetBeans"><svg><use href="#t-cube"/></svg></button>
    <button class="app current"><svg><use href="#t-chrome"/></svg><span>Verify...</span></button>
    <button class="pin" aria-label="Gephi"><svg><use href="#t-gephi"/></svg></button>
    <button class="app"><svg><use href="#t-splat"/></svg><span>twitte...</span></button>
    <button class="pin" aria-label="T"><svg><use href="#t-t"/></svg></button>
    <button class="pin" aria-label="Media player"><svg><use href="#t-play"/></svg></button>
    <button class="app"><svg><use href="#t-npp"/></svg><span>*new ...</span></button>
    <button class="app"><svg class="green-icon"><use href="#spotify"/></svg><span>Spotify</span></button>
    <button class="app"><svg><use href="#t-chat"/></svg><span>IBM S...</span></button>
    <button class="app"><svg><use href="#t-skype"/></svg><span>Skyp...</span></button>
    <button class="app"><svg><use href="#t-ff"/></svg><span>FFspli...</span></button>
    <button class="app"><svg><use href="#t-gephi"/></svg><span>Geph...</span></button>
  </div>
  <span class="grip"></span>
  <span class="lang">FR</span>
  <div class="tray">
    <svg viewBox="0 0 16 16"><path d="M4 10l4-4 4 4z" fill="#fff" stroke="#4c5868" stroke-width=".5"/></svg>
    <svg><use href="#s-drop"/></svg>
    <svg><use href="#s-plug"/></svg>
    <svg><use href="#s-bars"/></svg>
    <svg><use href="#s-vol"/></svg>
    <svg><use href="#drive"/></svg>
  </div>
  <time class="clock">10:42<br>31/01/2017</time>
  <button class="desktop" aria-label="Show desktop"></button>
</footer>
</body>
</html>
```

FILE: styles.css
```css
*, ::before, ::after { box-sizing: border-box; }

body {
  margin: 0;
  height: 100vh;
  display: flex;
  flex-direction: column;
  overflow: hidden;
  background: #fff;
  font-family: "Open Sans", "Noto Sans", sans-serif;
  font-size: 12px;
  color: #222;
}

button {
  margin: 0;
  padding: 0;
  border: 0;
  background: none;
  font: inherit;
  color: inherit;
}

a { text-decoration: none; color: inherit; }
svg { display: block; flex: none; }
.paints { position: absolute; width: 0; height: 0; }
.sprite { display: none; }
.ico { width: 16px; height: 16px; }

/* Tab strip */
.browser { flex: none; background: #f2f2f2; border-bottom: 1px solid #b0b0b0; }

.strip {
  display: flex;
  align-items: flex-start;
  height: 29px;
  padding: 0 4px 0 6px;
  background: #ccc;
  border-bottom: 1px solid #9c9c9c;
}

.tabs {
  flex: 1;
  display: grid;
  grid-template-columns: repeat(11, 85fr) repeat(9, 84fr);
  margin: 0;
  padding: 0;
  list-style: none;
}

.tab {
  position: relative;
  display: flex;
  align-items: center;
  height: 29px;
  padding: 1px 0 0 16px;
  min-width: 0;
}

.edge {
  position: absolute;
  left: 0;
  top: 0;
  width: calc(100% + 12px);
  height: 28px;
  overflow: visible;
}

.active .edge { height: 29px; }
.title { position: relative; display: flex; align-items: center; gap: 6px; }

.title span {
  width: 25px;
  overflow: hidden;
  text-align: left;
  white-space: nowrap;
  -webkit-mask-image: linear-gradient(90deg, #000 60%, transparent);
  mask-image: linear-gradient(90deg, #000 60%, transparent);
}

.bird-blue { color: #55acee; }
.close { position: relative; margin-left: 8px; }
.close svg { width: 8px; height: 8px; }
.new-tab { margin: 7px 17px 0 8px; }
.new-tab svg { width: 34px; height: 17px; }

.profile {
  width: 58px;
  height: 17px;
  border: 1px solid #999;
  border-top: 0;
  border-radius: 0 0 4px 4px;
  font-size: 11px;
  line-height: 16px;
  color: #fff;
  text-shadow: 1px 0 #444, -1px 0 #444, 0 1px #444, 0 -1px #444;
}

.window-controls {
  display: flex;
  margin-left: 6px;
  border: 1px solid #888;
  border-top: 0;
  border-radius: 0 0 4px 4px;
}

.window-controls button {
  display: flex;
  align-items: center;
  justify-content: center;
  width: 25px;
  height: 16px;
}

.window-controls button + button { border-left: 1px solid #888; }
.window-controls .wide { width: 42px; }
.window-controls svg { width: 13px; height: 13px; }

/* Address row */
.toolbar { display: flex; align-items: center; height: 36px; padding: 0 2px 0 10px; }
.nav-buttons { display: flex; gap: 12px; width: 110px; color: #555; }
.nav-buttons svg { width: 16px; height: 16px; }
.nav-buttons .forward { color: #ccc; transform: rotate(180deg); }

.omnibox {
  flex: 1;
  display: flex;
  align-items: center;
  gap: 6px;
  height: 28px;
  padding: 0 7px 0 10px;
  border: 1px solid #a9a9a9;
  border-radius: 3px;
  background: #fff;
  font-size: 13px;
}

.lock { width: 8px; height: 12px; margin-right: 4px; }
.secure { color: #0b8043; padding-right: 8px; border-right: 1px solid #999; line-height: 16px; }
.url { flex: 1; padding-left: 2px; color: #808080; }
.url b { font-weight: 400; color: #111; }
.url .green { color: #0b8043; }
.extensions { display: flex; }

.extensions button {
  display: flex;
  align-items: center;
  justify-content: center;
  width: 32px;
  height: 16px;
}

.extensions svg { width: 16px; height: 16px; }
.extensions .grey { color: #b0b0b0; }
.extensions .badged { align-items: flex-start; padding-left: 6px; }
.extensions .badged svg { width: 22px; height: 22px; }

/* Bookmarks */
.bookmarks { display: flex; align-items: center; height: 24px; padding: 0 15px 4px 11px; color: #111; }

.marks {
  flex: 1;
  display: grid;
  grid-template-columns: 98px 150px 151px 149px 150px 148px 104px 150px 150px 75px 134px 116px 150px;
}

.marks a { display: flex; align-items: center; gap: 5px; white-space: nowrap; }
.marks .small { width: 14px; height: 14px; }

.fade {
  width: 120px;
  overflow: hidden;
  -webkit-mask-image: linear-gradient(90deg, #000 85%, transparent);
  mask-image: linear-gradient(90deg, #000 85%, transparent);
}

.lime { color: #94c11f; }
.more svg { width: 8px; height: 8px; }

.others {
  display: flex;
  align-items: center;
  gap: 6px;
  margin-left: 8px;
  padding-left: 10px;
  border-left: 1px solid #bbb;
  line-height: 16px;
}

.others svg { width: 12px; height: 14px; }

/* Web page */
.viewport { flex: 1; display: flex; min-height: 0; }
.page { flex: 1; font-family: "Liberation Sans", Arial, sans-serif; }

.banner {
  display: flex;
  align-items: center;
  justify-content: center;
  height: 47px;
  background: linear-gradient(90deg, #55acee 5%, #34d08f);
  border-bottom: 1px solid rgba(0, 60, 100, .22);
  color: #fff;
}

.banner svg { width: 21px; height: 21px; }
main { width: 391px; margin: 0 auto; padding-top: 112px; }

h1 {
  margin: 0;
  font-size: 30px;
  line-height: 38px;
  font-weight: 400;
  color: #292f33;
}

main p { margin: 23px 0 0; font-size: 18px; line-height: 25px; color: #8899a6; }

.mask { position: relative; display: inline-block; width: 90px; }

.mask::after {
  content: "";
  position: absolute;
  left: -7px;
  bottom: -7px;
  width: 97px;
  height: 26px;
  border: 1px solid #111;
  border-left-color: #777;
  border-bottom: 2px solid #777;
  background: #fff;
}

form { display: flex; align-items: center; gap: 19px; margin-top: 24px; }

form input {
  flex: 1;
  min-width: 0;
  height: 47px;
  padding: 0 10px;
  border: 1px solid #55acee;
  border-radius: 3px;
  background: #fff;
  font: 18px "Liberation Sans", Arial, sans-serif;
}

form input::placeholder { color: #aab8c2; }

form button {
  width: 150px;
  height: 44px;
  border-radius: 4px;
  background: #1da1f2;
  color: #fff;
  font-size: 16px;
}

.links { display: flex; align-items: center; margin-top: 16px; font-size: 13px; line-height: 18px; color: #2b8ad8; }
.bar { width: 1px; height: 12px; margin: 0 21px; background: #e1e8ed; }

.scrollbar {
  width: 17px;
  display: flex;
  flex-direction: column;
  justify-content: space-between;
  align-items: center;
  padding: 7px 0;
  background: #f1f1f1;
}

.scrollbar span { border: 4px solid transparent; }
.scrollbar .up { border-top: 0; border-bottom-color: #a3a3a3; }
.scrollbar .down { border-bottom: 0; border-top-color: #a3a3a3; }

/* Taskbar */
.taskbar {
  flex: none;
  display: flex;
  align-items: center;
  height: 40px;
  padding-left: 8px;
  border-top: 1px solid #1f2a36;
  background: #8394ab;
  box-shadow: inset 0 1px #aab8c9;
  color: #fff;
}

.orb svg { width: 36px; height: 36px; }

.grip {
  width: 8px;
  height: 30px;
  margin-left: 14px;
  background: radial-gradient(circle, #37424f 1px, transparent 1px) 0 0 / 3px 4px;
}

.apps { display: flex; gap: 2px; margin-left: 10px; flex: 1; height: 39px; align-items: center; }
.pin { display: flex; justify-content: center; width: 53px; }
.apps svg { width: 32px; height: 32px; }

.app {
  display: flex;
  align-items: center;
  gap: 5px;
  width: 89px;
  height: 39px;
  padding-left: 5px;
  border: 1px solid #47525f;
  border-radius: 3px;
  background: linear-gradient(165deg, #b9c4d2 0, #a0aec0 45%, #8b9cb1 50%, #8f9fb4);
  box-shadow: inset 0 0 0 1px rgba(255, 255, 255, .35);
  white-space: nowrap;
}

.app.current { background: linear-gradient(165deg, #eef1f4, #c3ccd7 45%, #a9b5c5 50%, #b4bfcd); }
.app.stacked { border-right: 4px double #47525f; }
.green-icon { color: #1ed760; }
.lang { width: 27px; margin-left: 9px; padding-bottom: 4px; }
.tray { display: flex; gap: 8px; }
.tray svg { width: 16px; height: 16px; }

.clock { width: 80px; margin-left: 6px; margin-right: 2px; text-align: center; line-height: 17px; }

.desktop {
  width: 14px;
  height: 39px;
  border: 1px solid #47525f;
  border-width: 0 1px;
  background: linear-gradient(150deg, #a3b0c1, #5f7086 50%, #7889a0);
}
```
